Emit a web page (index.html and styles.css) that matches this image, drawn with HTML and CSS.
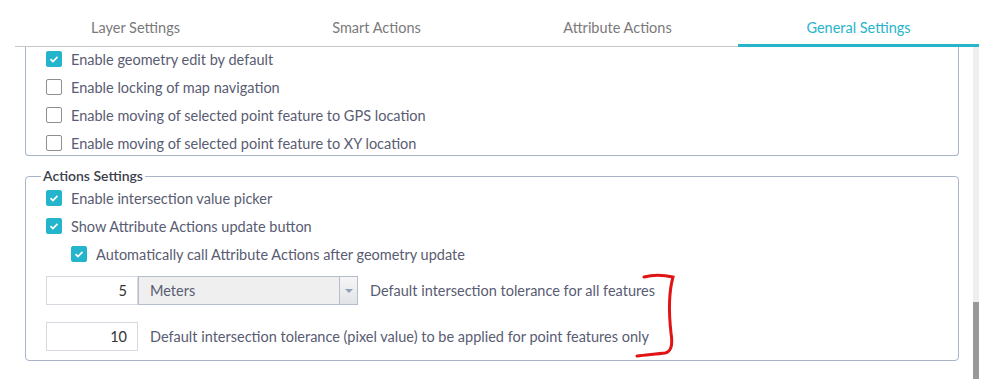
FILE: index.html
```html
<!DOCTYPE html>
<html lang="en">
<head>
    <meta charset="UTF-8">
    <title>General Settings</title>
    <link rel="stylesheet" href="styles.css">
</head>
<body>
    <div class="tabs">
        <div class="tab">Layer Settings</div>
        <div class="tab">Smart Actions</div>
        <div class="tab">Attribute Actions</div>
        <div class="tab active">General Settings</div>
    </div>
    <div class="main">
        <div class="panel">
            <div class="box">
                <label class="row"><span class="check on"><svg viewBox="0 0 16 16"><path d="M4 8.2l2.8 2.8L12 5.6"/></svg></span>Enable geometry edit by default</label>
                <label class="row"><span class="check"></span>Enable locking of map navigation</label>
                <label class="row"><span class="check"></span>Enable moving of selected point feature to GPS location</label>
                <label class="row"><span class="check"></span>Enable moving of selected point feature to XY location</label>
            </div>
            <fieldset class="group">
                <legend>Actions Settings</legend>
                <label class="row"><span class="check on"><svg viewBox="0 0 16 16"><path d="M4 8.2l2.8 2.8L12 5.6"/></svg></span>Enable intersection value picker</label>
                <label class="row"><span class="check on"><svg viewBox="0 0 16 16"><path d="M4 8.2l2.8 2.8L12 5.6"/></svg></span>Show Attribute Actions update button</label>
                <label class="row sub"><span class="check on"><svg viewBox="0 0 16 16"><path d="M4 8.2l2.8 2.8L12 5.6"/></svg></span>Automatically call Attribute Actions after geometry update</label>
                <div class="field first">
                    <div class="num">5</div>
                    <div class="select">
                        <span class="value">Meters</span>
                        <span class="arrow"><svg viewBox="0 0 8 4"><path d="M0 0h8L4 4z"/></svg></span>
                    </div>
                    <span class="desc">Default intersection tolerance for all features</span>
                </div>
                <div class="field second">
                    <div class="num">10</div>
                    <span class="desc">Default intersection tolerance (pixel value) to be applied for point features only</span>
                </div>
                <!-- hand drawn annotation -->
                <svg class="bracket" viewBox="0 0 50 100">
                    <path d="M9 6 C20 3 29 4 38 6 C33 24 34 44 36 62 C38 74 36 81 30 82 C22 83 10 84 2 85"/>
                </svg>
            </fieldset>
        </div>
        <div class="scrollbar"><div class="thumb"></div></div>
    </div>
</body>
</html>
```

FILE: styles.css
```css
body {
    margin: 0;
    font-family: Lato, "Open Sans", sans-serif;
    font-size: 14.5px;
    color: #595c72;
    background: #fff;
    width: 998px;
    height: 380px;
    overflow: hidden;
}
.tabs {
    display: flex;
    margin-left: 15px;
    width: 964px;
    border-bottom: 1px solid #c8c8c8;
}
.tab {
    flex: 1;
    height: 46px;
    line-height: 56px;
    text-align: center;
    color: #7a7a7a;
    margin-bottom: -1px;
    border-bottom: 1px solid transparent;
}
.tab.active {
    color: #28b4cb;
    height: 44px;
    border-bottom: 3px solid #28b4cb;
}
.main {
    display: flex;
    padding-left: 25px;
    height: 332px;
}
.panel {
    width: 934px;
    margin-right: 14px;
}
.box {
    border: 1px solid #a8b4c8;
    border-top: none;
    border-radius: 0 0 4px 4px;
    padding: 0 12px 0 20px;
    height: 108px;
}
.row {
    display: flex;
    align-items: center;
    height: 24px;
    margin-bottom: 4px;
}
.row.sub {
    padding-left: 25px;
}
.check {
    box-sizing: border-box;
    width: 16px;
    height: 16px;
    border: 1px solid #8e8e8e;
    border-radius: 2px;
    margin-right: 9px;
    flex-shrink: 0;
}
.check.on {
    background: #24b4cb;
    border-color: #24b4cb;
}
.check svg {
    display: block;
    width: 14px;
    height: 14px;
    fill: none;
    stroke: #fff;
    stroke-width: 2;
}
.group {
    margin: 10px 0 0;
    border: 1px solid #a8b4c8;
    border-radius: 4px;
    padding: 0 12px 9px 20px;
    position: relative;
}
.group legend {
    margin-left: -5px;
    padding: 0 2px;
    line-height: 20px;
    color: #3c3f4c;
    font-weight: 600;
    font-size: 14px;
}
.field {
    display: flex;
    align-items: center;
}
.field.first {
    margin-top: 10px;
}
.field.second {
    margin-top: 17px;
}
.num {
    box-sizing: border-box;
    width: 92px;
    height: 29px;
    border: 1px solid #d6d9e0;
    text-align: right;
    padding-right: 10px;
    line-height: 27px;
    color: #333;
}
.select {
    box-sizing: border-box;
    display: flex;
    width: 220px;
    height: 29px;
    background: #efefef;
    border: 1px solid #b5bccb;
}
.select .value {
    flex: 1;
    padding-left: 11px;
    line-height: 27px;
}
.select .arrow {
    width: 17px;
    border-left: 1px solid #b5bccb;
    background: linear-gradient(#f6f6f6, #e2e3e6);
    display: flex;
    align-items: center;
    justify-content: center;
}
.select .arrow svg {
    width: 8px;
    height: 4px;
    fill: #8ea0ba;
}
.desc {
    margin-left: 12px;
}
.bracket {
    position: absolute;
    left: 609px;
    top: 85px;
    width: 50px;
    height: 100px;
    fill: none;
    stroke: #e01414;
    stroke-width: 3;
    stroke-linecap: round;
}
.scrollbar {
    width: 6px;
    background: #eeeeee;
    display: flex;
    flex-direction: column;
}
.thumb {
    margin-top: auto;
    height: 77px;
    background: #999;
}
```
